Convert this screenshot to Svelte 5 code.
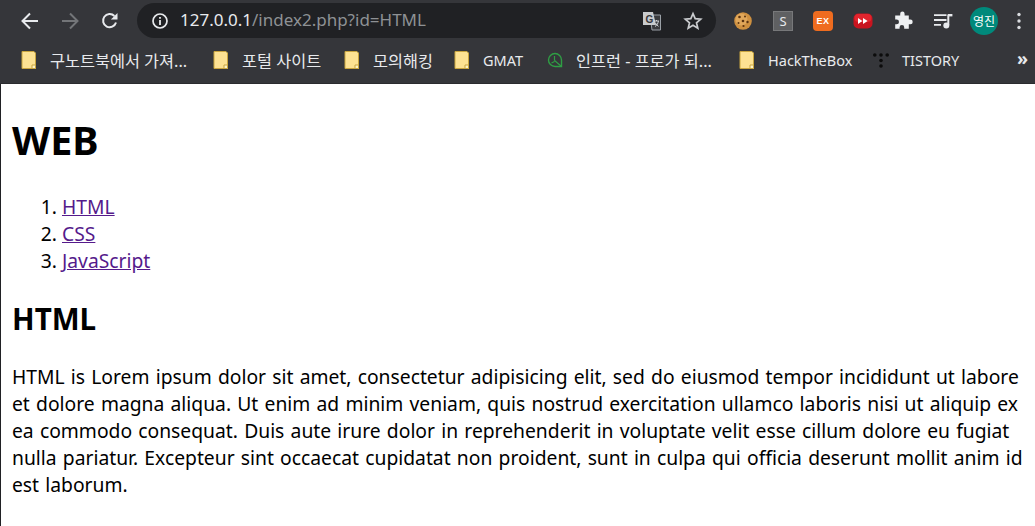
<script lang="ts">
	const links = ['HTML', 'CSS', 'JavaScript'];
	const bookmarks = [
		{ label: '구노트북에서 가져...', icon: 'folder', width: 192, ko: true },
		{ label: '포털 사이트', icon: 'folder', width: 131, ko: true },
		{ label: '모의해킹', icon: 'folder', width: 110, ko: true },
		{ label: 'GMAT', icon: 'folder', width: 93, ko: false },
		{ label: '인프런 - 프로가 되...', icon: 'leaf', width: 192, ko: true },
		{ label: 'HackTheBox', icon: 'folder', width: 134, ko: false },
		{ label: 'TISTORY', icon: 'dots', width: 110, ko: false }
	];
</script>

<div class="chrome">
	<div class="toolbar">
		<button class="nav" aria-label="Back">
			<svg width="20" height="20" viewBox="0 0 20 20"><path d="M18 10H3.500M10 2.500 2.500 10l7.500 7.500" fill="none" stroke="#e8eaed" stroke-width="2" /></svg>
		</button>
		<button class="nav" aria-label="Forward">
			<svg width="20" height="20" viewBox="0 0 20 20"><path d="M2 10h14.500M10 2.500l7.500 7.500-7.500 7.500" fill="none" stroke="#737578" stroke-width="2" /></svg>
		</button>
		<button class="nav" aria-label="Reload">
			<svg width="20" height="20" viewBox="0 0 20 20"><path d="M16 11.500A6.600 6.600 0 1 1 14.400 5" fill="none" stroke="#e8eaed" stroke-width="2" /><path d="M17.500 2v6.600h-6.600z" fill="#e8eaed" /></svg>
		</button>
		<div class="omnibox">
			<svg class="info" width="18" height="18" viewBox="0 0 18 18"><circle cx="9" cy="9" r="7" fill="none" stroke="#e8eaed" stroke-width="1.700" /><path d="M8.100 8h1.800v5H8.100zM8.100 5h1.800v1.800H8.100z" fill="#e8eaed" /></svg>
			<span class="url"><span class="host">127.0.0.1</span>/index2.php?id=HTML</span>
			<svg class="translate" width="20" height="20" viewBox="0 0 20 20">
				<path d="M8 4h10.500v15H10z" fill="#3a3b3e" stroke="#9aa0a6" />
				<path d="M1 1h10l3 13H1z" fill="#c9cbcd" />
				<text x="3.500" y="11.500" class="g">G</text>
				<path d="M12 10h5M14.500 9v1M13 15.500c2-1 3-3 3.400-5.500M13.500 12c.7 1.400 1.700 2.600 3 3.400" fill="none" stroke="#dadce0" stroke-width=".9" />
			</svg>
			<svg class="star" width="20" height="20" viewBox="0 0 20 20"><path d="M10 2.600l2.200 5.100 5.500.5-4.200 3.600 1.300 5.400L10 14.300l-4.800 2.900 1.300-5.400-4.200-3.600 5.500-.5z" fill="none" stroke="#c9cbce" stroke-width="1.700" /></svg>
		</div>
		<div class="extensions">
			<svg width="20" height="20" viewBox="0 0 20 20">
				<circle cx="10" cy="10" r="8.800" fill="#cf9140" />
				<circle cx="8.500" cy="8.500" r="6" fill="#e0a75a" />
				<g fill="#5b3410"><circle cx="6.500" cy="6" r="1.300" /><circle cx="12" cy="5.500" r="1" /><circle cx="10" cy="10" r="1.300" /><circle cx="5.500" cy="12" r="1" /><circle cx="14.500" cy="11" r="1.200" /><circle cx="10.500" cy="15" r="1.100" /></g>
			</svg>
			<span class="ext-s">S</span>
			<span class="ext-ex">EX</span>
			<svg width="20" height="20" viewBox="0 0 20 20">
				<rect x="0.500" y="2.500" width="19" height="15" rx="5" fill="#c8141f" />
				<rect x="1.500" y="3" width="17" height="8" rx="4" fill="#e2252e" />
				<path d="M5 7l4.400 3L5 13zM10 7l4.600 3-4.600 3z" fill="#fff" />
			</svg>
			<svg width="20" height="20" viewBox="0 0 20 20"><path d="M7.200 2.800a2.200 2.200 0 0 1 4.400 0V4.600h4.200v4h1.600a2.300 2.300 0 0 1 0 4.600h-1.600v4.600H11.200v-1.500a2.300 2.300 0 0 0-4.600 0v1.500H2.200v-4.500h1.400a2.400 2.400 0 0 0 0-4.800H2.200V4.600h5z" fill="#eef0f2" /></svg>
			<svg width="20" height="20" viewBox="0 0 20 20"><path d="M1 4.200h12.500M1 9h12.500M1 13.800h7" fill="none" stroke="#e8eaed" stroke-width="1.800" /><path d="M15.300 3.500V14" fill="none" stroke="#e8eaed" stroke-width="2" /><path d="M15 3h4.400v2.400H15z" fill="#e8eaed" /><circle cx="13.300" cy="14.400" r="3" fill="#e8eaed" /></svg>
			<span class="avatar">영진</span>
			<svg class="menu" width="6" height="20" viewBox="0 0 6 20"><circle cx="3" cy="3.500" r="1.700" /><circle cx="3" cy="10" r="1.700" /><circle cx="3" cy="16.500" r="1.700" /></svg>
		</div>
	</div>

	<div class="bookmarks">
		{#each bookmarks as b}
			<div class="bookmark" style="width: {b.width}px">
				{#if b.icon === 'folder'}
					<svg width="16" height="20" viewBox="0 0 16 20"><path d="M1 1.500h12l1.500 1.500v15.500H1z" fill="#fde293" stroke="#c9a53f" /><path d="M11 18.500v-3.500h3.500v3.500z" fill="#fff3c4" stroke="#c9a53f" /></svg>
				{:else if b.icon === 'leaf'}
					<svg width="16" height="20" viewBox="0 0 16 20"><path d="M14.500 16.500H8A6.500 6.500 0 1 1 14.500 10z" fill="none" stroke="#2f9e44" stroke-width="1.400" /><path d="M14 16 7.500 10.500M7.500 6v4.500M7.500 11.500 4.500 13" fill="none" stroke="#2f9e44" stroke-width="1.200" /></svg>
				{:else}
					<svg width="16" height="20" viewBox="0 0 16 20"><g fill="#0c0c0c"><circle cx="1.800" cy="5" r="1.800" /><circle cx="8" cy="5" r="1.800" /><circle cx="14.200" cy="5" r="1.800" /><circle cx="8" cy="10.500" r="1.800" /><circle cx="8" cy="16" r="1.800" /></g></svg>
				{/if}
				<span class="bookmark-label" class:ko={b.ko}>{b.label}</span>
			</div>
		{/each}
		<span class="more">»</span>
	</div>
</div>

<main class="page">
	<h1>WEB</h1>
	<ol>
		{#each links as link}
			<li><a href="#{link}">{link}</a></li>
		{/each}
	</ol>
	<h2>HTML</h2>
	<p>HTML is Lorem ipsum dolor sit amet, consectetur adipisicing elit, sed do eiusmod tempor incididunt ut labore et dolore magna aliqua. Ut enim ad minim veniam, quis nostrud exercitation ullamco laboris nisi ut aliquip ex ea commodo consequat. Duis aute irure dolor in reprehenderit in voluptate velit esse cillum dolore eu fugiat nulla pariatur. Excepteur sint occaecat cupidatat non proident, sunt in culpa qui officia deserunt mollit anim id est laborum.</p>
</main>

<style>
	:global(body) {
		background: #fff;
		overflow: hidden;
	}

	.chrome {
		background: #35363a;
		border-bottom: 1px solid #2a2b2e;
		font-family: 'Noto Sans', 'Noto Sans CJK KR', sans-serif;
		height: 83px;
	}

	.toolbar {
		align-items: center;
		display: flex;
		height: 41px;
		padding-left: 10px;
	}

	.nav {
		align-items: center;
		background: none;
		border: 0;
		display: flex;
		height: 40px;
		justify-content: center;
		padding: 0;
		width: 40px;
	}

	.omnibox {
		align-items: center;
		background: #202124;
		border-radius: 18px;
		display: flex;
		height: 35px;
		margin-left: 7px;
		padding: 0 13px 0 14px;
		width: 552px;
	}

	.info {
		flex: none;
	}

	.url {
		color: #8e9194;
		flex: 1;
		font-size: 17px;
		margin-left: 11px;
		margin-top: -2px;
		white-space: nowrap;
	}

	.host {
		color: #e8eaed;
	}

	.g {
		fill: #35363a;
		font-family: 'Liberation Sans', sans-serif;
		font-size: 10px;
		font-weight: 700;
	}

	.translate {
		margin-right: 21px;
	}

	.extensions {
		align-items: center;
		display: flex;
		flex: 1;
		gap: 20px;
		margin-left: 17px;
		padding-right: 8px;
	}

	.ext-s,
	.ext-ex {
		align-items: center;
		display: flex;
		height: 20px;
		justify-content: center;
		width: 20px;
	}

	.ext-s {
		background: #5f6062;
		border: 1px solid #77787a;
		box-sizing: border-box;
		color: #e8eaed;
		font-size: 13px;
	}

	.ext-ex {
		background: #ef6c1f;
		border-radius: 4px;
		color: #fff;
		font-family: 'Liberation Sans', sans-serif;
		font-size: 9px;
		font-weight: 700;
		letter-spacing: 0.5px;
	}

	.avatar {
		align-items: center;
		background: #00897b;
		border-radius: 50%;
		color: #fff;
		display: flex;
		flex: none;
		font-size: 12px;
		height: 28px;
		justify-content: center;
		margin: 0 -2px 0 -3px;
		width: 28px;
	}

	.menu {
		fill: #dadce0;
	}

	.bookmarks {
		align-items: center;
		display: flex;
		height: 38px;
		padding-left: 21px;
	}

	.bookmark {
		align-items: center;
		color: #e8eaed;
		display: flex;
		flex: none;
		font-size: 14.5px;
		gap: 13px;
	}

	.bookmark-label {
		white-space: nowrap;
	}

	.bookmark-label.ko {
		font-size: 16.3px;
	}

	.more {
		color: #e8eaed;
		font-size: 18px;
		font-weight: 700;
		line-height: 1;
		margin-left: auto;
		margin-right: 7px;
		margin-top: -4px;
	}

	.page {
		border-left: 1px solid #202124;
		color: #000;
		font-family: 'Noto Sans', sans-serif;
		font-size: 19.3px;
		height: 442px;
		line-height: 27px;
		overflow: hidden;
		padding: 0 12px 0 11px;
	}

	h1 {
		font-size: 39.5px;
		font-weight: 700;
		line-height: 50px;
		margin: 0;
		padding: 31px 0 28px;
	}

	ol {
		margin: 0;
		padding-left: 50px;
	}

	a {
		color: #551a8b;
	}

	h2 {
		font-size: 29.6px;
		font-weight: 700;
		line-height: 38px;
		margin: 0;
		padding: 26px 0 25px;
	}

	p {
		margin: 0;
		word-spacing: 1.2px;
	}
</style>
